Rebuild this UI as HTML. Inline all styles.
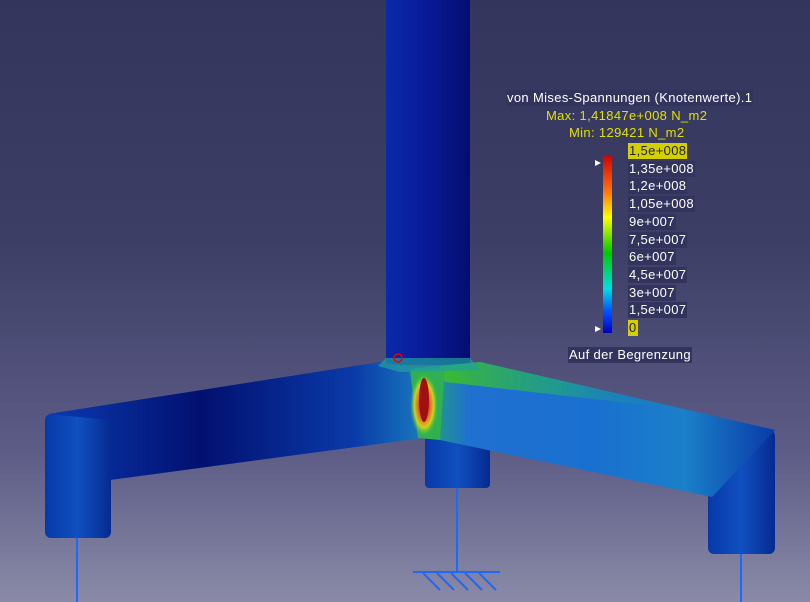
<!DOCTYPE html>
<html><head><meta charset="utf-8"><style>
html,body{margin:0;padding:0}
body{width:810px;height:602px;overflow:hidden;position:relative;background:linear-gradient(#34355c 0%,#3d3e66 40%,#5c5c86 75%,#8a8aa8 100%);font-family:"Liberation Sans",sans-serif}
svg{position:absolute;left:0;top:0}
.t{position:absolute;font-size:13px;line-height:16px;white-space:nowrap;letter-spacing:.35px}
.l{position:absolute;left:628px;font-size:13px;line-height:16px;color:#fff;background:#33345e;padding:0 1px;letter-spacing:.35px}
</style></head><body>
<svg width="810" height="602" viewBox="0 0 810 602">
<defs>
<linearGradient id="col" x1="0" x2="1"><stop offset="0" stop-color="#0a2aa8"/><stop offset=".4" stop-color="#0a1c9c"/><stop offset="1" stop-color="#040e70"/></linearGradient>
<linearGradient id="la" x1="0" x2="1"><stop offset="0" stop-color="#0a3ab0"/><stop offset=".4" stop-color="#021070"/><stop offset=".8" stop-color="#0a3aa8"/><stop offset="1" stop-color="#1a80c0"/></linearGradient>
<linearGradient id="ra" x1="0" x2="1"><stop offset="0" stop-color="#20b060"/><stop offset=".15" stop-color="#2070d0"/><stop offset=".5" stop-color="#1a70d0"/><stop offset=".75" stop-color="#1a80c8"/><stop offset="1" stop-color="#0a3aa8"/></linearGradient>
<linearGradient id="rt" x1="0" x2="1"><stop offset="0" stop-color="#40c020" stop-opacity=".9"/><stop offset=".5" stop-color="#20b070" stop-opacity=".6"/><stop offset="1" stop-color="#1a80c8" stop-opacity="0"/></linearGradient>
<linearGradient id="leg" x1="0" x2="1"><stop offset="0" stop-color="#0838a8"/><stop offset=".5" stop-color="#1050c0"/><stop offset="1" stop-color="#062a90"/></linearGradient>
<linearGradient id="bar" x1="0" y1="0" x2="0" y2="1"><stop offset="0" stop-color="#d00000"/><stop offset=".2" stop-color="#ff7010"/><stop offset=".35" stop-color="#ffff00"/><stop offset=".55" stop-color="#00c800"/><stop offset=".75" stop-color="#00e0e0"/><stop offset=".88" stop-color="#0050ff"/><stop offset="1" stop-color="#0000c0"/></linearGradient>
<radialGradient id="hot" cx=".5" cy=".5" r=".5"><stop offset="0" stop-color="#b01010"/><stop offset=".4" stop-color="#e06020"/><stop offset=".7" stop-color="#d0d020"/><stop offset="1" stop-color="#30c040" stop-opacity="0"/></radialGradient>
</defs>
<rect x="386" y="0" width="84" height="365" fill="url(#col)"/>
<rect x="425" y="430" width="65" height="58" rx="4" fill="url(#leg)"/>
<rect x="45" y="414" width="66" height="124" rx="6" fill="url(#leg)"/>
<rect x="708" y="430" width="67" height="124" rx="6" fill="url(#leg)"/>
<polygon points="48,414 380,362 415,368 430,437 110,480 111,420" fill="url(#la)"/>
<polygon points="415,368 480,362 775,430 712,497 440,440 425,437" fill="url(#ra)"/>
<polygon points="440,366 480,362 690,410 445,382" fill="url(#rt)"/>
<polygon points="410,370 445,368 440,440 418,438" fill="#30b050"/>
<ellipse cx="424" cy="405" rx="14" ry="32" fill="url(#hot)"/>
<ellipse cx="424" cy="400" rx="5" ry="22" fill="#a01010"/>
<polygon points="386,358 470,358 480,370 400,372 378,366" fill="#20a0a0" opacity=".7"/>
<circle cx="398" cy="358" r="4" fill="none" stroke="#e00" stroke-width="1.5"/>
<g stroke="#1a6aff" stroke-width="2" fill="none">
<line x1="77" y1="538" x2="77" y2="602"/><line x1="457" y1="488" x2="457" y2="572"/><line x1="741" y1="554" x2="741" y2="602"/>
<line x1="413" y1="572" x2="500" y2="572"/>
<line x1="423" y1="573" x2="440" y2="590"/><line x1="437" y1="573" x2="454" y2="590"/><line x1="451" y1="573" x2="468" y2="590"/><line x1="465" y1="573" x2="482" y2="590"/><line x1="479" y1="573" x2="496" y2="590"/>
</g>
<rect x="603" y="155" width="9" height="178" fill="url(#bar)"/>
<path d="M595 160 L601 163 L595 166 Z M595 326 L601 329 L595 332 Z" fill="#fff"/>
</svg>
<div class="t" style="left:506px;top:90px;color:#fff;background:#33345e;padding:0 1px">von Mises-Spannungen (Knotenwerte).1</div>
<div class="t" style="left:546px;top:108px;color:#e0e000">Max: 1,41847e+008 N_m2</div>
<div class="t" style="left:569px;top:125px;color:#e0e000">Min: 129421 N_m2</div>
<div class="l" style="top:143px;background:#d4d000;color:#222">1,5e+008</div>
<div class="l" style="top:161px">1,35e+008</div>
<div class="l" style="top:178px">1,2e+008</div>
<div class="l" style="top:196px">1,05e+008</div>
<div class="l" style="top:214px">9e+007</div>
<div class="l" style="top:232px">7,5e+007</div>
<div class="l" style="top:249px">6e+007</div>
<div class="l" style="top:267px">4,5e+007</div>
<div class="l" style="top:285px">3e+007</div>
<div class="l" style="top:302px">1,5e+007</div>
<div class="l" style="top:320px;background:#d4d000;color:#222">0</div>
<div class="t" style="left:568px;top:347px;color:#fff;background:#33345e;padding:0 1px">Auf der Begrenzung</div>
</body></html>
